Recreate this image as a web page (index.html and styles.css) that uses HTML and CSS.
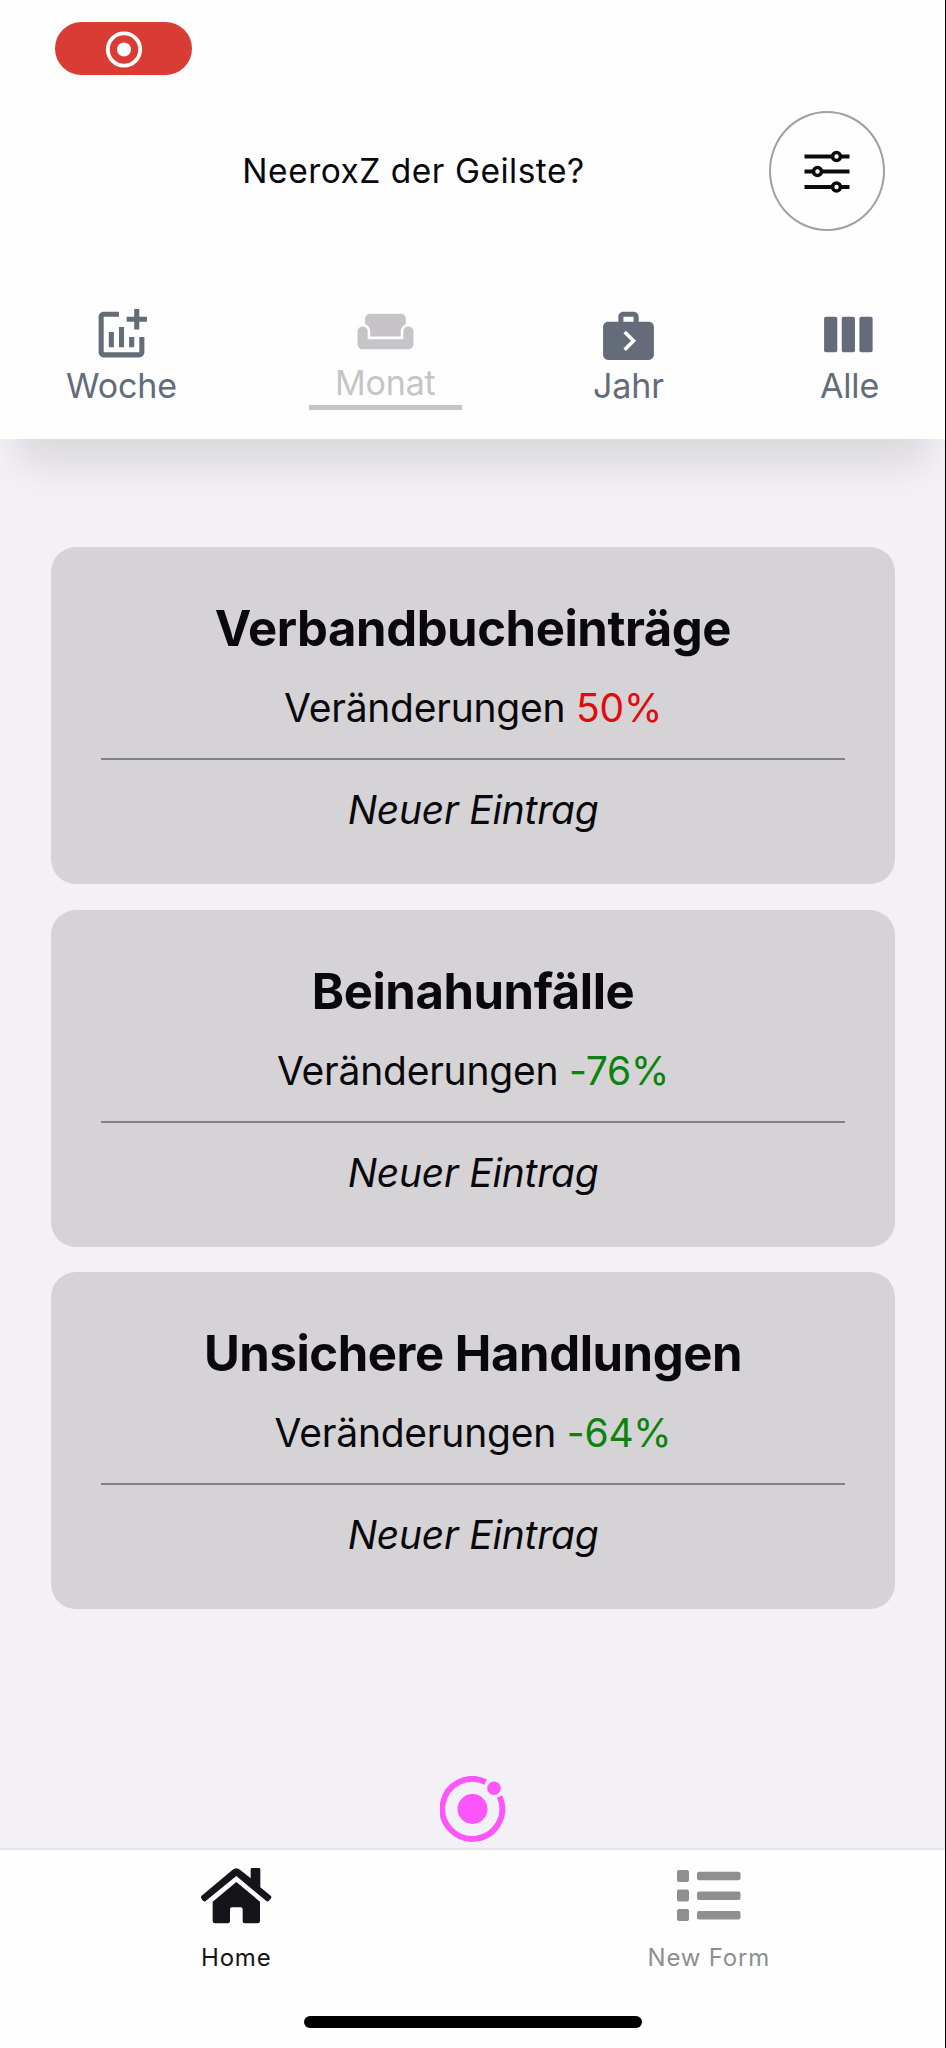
FILE: index.html
```
<!DOCTYPE html>
<html lang="de">
<head>
<meta charset="utf-8">
<title>Home</title>
<link rel="stylesheet" href="styles.css">
</head>
<body>
<div class="screen">
  <header class="header">
    <div class="status">
      <div class="record">
        <svg width="38" height="38" viewBox="0 0 38 38"><circle cx="19" cy="19.500" r="16.200" fill="none" stroke="#fff" stroke-width="3.800"/><circle cx="19" cy="19.500" r="7" fill="#fff"/></svg>
      </div>
    </div>
    <div class="title-row">
      <h1 class="title">NeeroxZ der Geilste?</h1>
      <button class="filter" aria-label="Filter">
        <svg width="46" height="44" viewBox="0 0 46 44" stroke="#0b0b0f" fill="none"><path stroke-width="3.800" d="M.5 7.500h27M37 7.500h8.500M.5 22.500h8M18 22.500h27.500M.5 38h27M37 38h8.500"/><g stroke-width="3.600"><circle cx="32.500" cy="7.500" r="4"/><circle cx="13.500" cy="22.500" r="4"/><circle cx="32.500" cy="38" r="4"/></g></svg>
      </button>
    </div>
    <nav class="tabs">
      <a class="tab tab-week">
        <svg class="tab-icon" viewBox="0 0 24 24"><path d="M22 5v2h-3v3h-2V7h-3V5h3V2h2v3h3zm-3 14H5V5h6V3H5c-1.100 0-2 .9-2 2v14c0 1.100.9 2 2 2h14c1.100 0 2-.9 2-2v-6h-2v6zm-4-6v4h2v-4h-2zm-4 4h2V9h-2v8zm-2 0v-6H7v6h2z"/></svg>
        <span>Woche</span>
      </a>
      <a class="tab tab-month">
        <svg class="tab-icon" viewBox="0 0 24 24"><path d="M21 10c-1.100 0-2 .9-2 2v3H5v-3c0-1.100-.9-2-2-2s-2 .9-2 2v5c0 1.100.9 2 2 2h18c1.100 0 2-.9 2-2v-5c0-1.100-.9-2-2-2zm-3-5H6c-1.100 0-2 .9-2 2v2.150c1.160.410 2 1.510 2 2.820V14h12v-2.030c0-1.300.840-2.400 2-2.820V7c0-1.100-.9-2-2-2z"/></svg>
        <span>Monat</span>
      </a>
      <a class="tab tab-year">
        <svg class="tab-icon" viewBox="0 0 24 24"><path fill-rule="evenodd" d="M20 7h-4V5c0-1.100-.9-2-2-2h-4c-1.100 0-2 .9-2 2v2H4c-1.100 0-2 .9-2 2v11c0 1.100.9 2 2 2h16c1.100 0 2-.9 2-2V9c0-1.100-.9-2-2-2zM10 5h4v2h-4zM11 18.500l-1-1 3-3-3-3 1-1 4 4-4 4z"/></svg>
        <span>Jahr</span>
      </a>
      <a class="tab tab-all">
        <svg class="tab-icon" viewBox="0 0 24 24"><rect x="2" y="5" width="5.200" height="14" rx=".7"/><rect x="8.950" y="5" width="5.200" height="14" rx=".7"/><rect x="15.900" y="5" width="5.200" height="14" rx=".7"/></svg>
        <span>Alle</span>
      </a>
    </nav>
  </header>

  <main class="content">
    <section class="card">
      <h2 class="card-title">Verbandbucheinträge</h2>
      <p class="change">Veränderungen <span class="up">50%</span></p>
      <hr class="rule">
      <p class="entry">Neuer Eintrag</p>
    </section>
    <section class="card">
      <h2 class="card-title">Beinahunfälle</h2>
      <p class="change">Veränderungen <span class="down">-76%</span></p>
      <hr class="rule">
      <p class="entry">Neuer Eintrag</p>
    </section>
    <section class="card">
      <h2 class="card-title">Unsichere Handlungen</h2>
      <p class="change">Veränderungen <span class="down">-64%</span></p>
      <hr class="rule">
      <p class="entry">Neuer Eintrag</p>
    </section>
    <svg class="logo" width="66" height="66" viewBox="0 0 66 66"><g fill="#fb55fb"><circle cx="32.500" cy="33" r="15"/><circle cx="54" cy="12.300" r="6.800"/></g><path fill="none" stroke="#fb55fb" stroke-width="5.800" d="M45.700 6.100A30 30 0 1 0 59.600 20.500"/></svg>
  </main>

  <footer class="tabbar">
    <div class="bar-items">
      <a class="bar-item active">
        <svg width="71.333" height="57" viewBox="62 82 214 171"><path d="M216 85h20q4 0 4 4v54l31 25q4 4 1 8l-6 7q-4 4-8 1L168 109 76 184q-4 3-8-1l-5-7q-3-4 1-8l92-77q12-10 24 0l31 25V89q0-4 5-4z"/><path d="M168 127l71 59v58q0 7-7 7h-39q-6 0-6-6v-36q0-6-6-6h-26q-6 0-6 6v36q0 6-6 6h-39q-7 0-7-7v-58z"/></svg>
        <span>Home</span>
      </a>
      <a class="bar-item">
        <svg width="64" height="57" viewBox="0 0 64 57"><rect x="0" y="3" width="12" height="12" rx="2"/><rect x="0" y="22.500" width="12" height="12" rx="2"/><rect x="0" y="42" width="12" height="12" rx="2"/><rect x="20" y="4.700" width="43.500" height="8.500" rx="2"/><rect x="20" y="24.400" width="43.500" height="8.500" rx="2"/><rect x="20" y="44" width="43.500" height="8.500" rx="2"/></svg>
        <span>New Form</span>
      </a>
    </div>
    <div class="home-indicator"></div>
  </footer>
</div>
</body>
</html>
```
FILE: styles.css
```
* { box-sizing: border-box; }

body {
  margin: 0;
  font-family: Inter, "Liberation Sans", sans-serif;
  color: #09090d;
}

h1, h2, p { margin: 0; font-weight: 400; }

.screen {
  display: flex;
  flex-direction: column;
  width: 946px;
  height: 2048px;
  border-right: 1px solid #000;
  background: #f3f1f5;
  overflow: hidden;
}

.header {
  height: 439px;
  flex: none;
  background: #fefefe;
  box-shadow: 0 44px 36px -18px rgba(0, 0, 0, 0.1);
}

.status {
  height: 111px;
  padding: 22px 0 0 55px;
}

.record {
  display: flex;
  align-items: center;
  justify-content: center;
  width: 137px;
  height: 53px;
  border-radius: 27px;
  background: #d83c35;
}

.title-row {
  display: flex;
  align-items: center;
  height: 120px;
  padding: 0 60px 0 58px;
}

.title {
  flex: 1;
  text-align: center;
  font-size: 33.5px;
  line-height: 40px;
  letter-spacing: 0.5px;
}

.filter {
  display: flex;
  align-items: center;
  justify-content: center;
  width: 116px;
  height: 120px;
  padding: 0;
  border: 2px solid #a09fa1;
  border-radius: 50%;
  background: none;
}

.tabs {
  display: flex;
  align-items: flex-start;
  padding: 73px 0 0 61.500px;
}

.tab {
  display: flex;
  flex-direction: column;
  align-items: center;
  color: #646c79;
  font-size: 34px;
  line-height: 42px;
  letter-spacing: -0.15px;
}

.tab-icon {
  width: 61px;
  height: 61px;
  fill: currentColor;
}

.tab-week { width: 120px; margin-right: 127px; }

.tab-month {
  width: 153.500px;
  margin: -3px 127px 0 0;
  padding-bottom: 0.500px;
  border-bottom: 5px solid #c6c4c8;
  color: #c6c4c8;
}

.tab-year { width: 79px; margin-right: 146.500px; }
.tab-all { width: 70px; }

.content {
  flex: 1;
  display: flex;
  flex-direction: column;
  align-items: center;
  gap: 25.500px;
  padding: 108px 50px 0 51px;
}

.card {
  width: 100%;
  height: 337px;
  flex: none;
  padding: 52px 50px 0;
  border-radius: 25px;
  background: #d5d3d6;
  text-align: center;
}

.card-title {
  margin-bottom: 25px;
  font-size: 49px;
  font-weight: 700;
  line-height: 60px;
  letter-spacing: -0.42px;
}

.change, .entry {
  font-size: 39px;
  line-height: 48px;
  letter-spacing: -0.23px;
}

.entry { font-style: italic; }

.rule {
  height: 2px;
  margin: 26px 0;
  border: 0;
  background: #828184;
}

.up { color: #e00b0b; }
.down { color: #0b830e; }

.logo { margin-top: 141px; }

.tabbar {
  flex: none;
  height: 200px;
  border-top: 2px solid #e6e4e8;
  background: #fefefe;
}

.bar-items { display: flex; height: 165.500px; }

.bar-item {
  flex: 1;
  display: flex;
  flex-direction: column;
  align-items: center;
  padding-top: 17px;
  color: #8f8e91;
  fill: currentColor;
  font-size: 24px;
  line-height: 32px;
  letter-spacing: 0.8px;
}

.bar-item span { margin-top: 18px; }
.bar-item.active { color: #15141a; }

.home-indicator {
  width: 338px;
  height: 12px;
  margin: 0 auto;
  border-radius: 6px;
  background: #000;
}
```
